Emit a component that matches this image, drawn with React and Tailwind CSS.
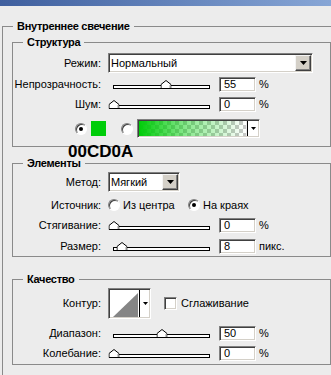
const sunken =
  'border border-t-[#808080] border-l-[#808080] border-r-white border-b-white shadow-[inset_1px_1px_0_#404040,inset_-1px_-1px_0_#d4d0c8]';
const raised =
  'border border-t-[#f4f4f4] border-l-[#f4f4f4] border-r-[#404040] border-b-[#404040] shadow-[inset_-1px_-1px_0_#808080]';

function Arrow({ small }) {
  return small ? (
    <svg width="5" height="3" viewBox="0 0 5 3"><polygon points="0,0 5,0 2.5,3" fill="#000" /></svg>
  ) : (
    <svg width="7" height="4" viewBox="0 0 7 4"><polygon points="0,0 7,0 3.5,4" fill="#000" /></svg>
  );
}

function Select({ value, width }) {
  return (
    <div className={`flex h-[20px] bg-white ${sunken} ${width}`}>
      <span className="flex-1 self-center pl-[2px] leading-[13px]">{value}</span>
      <div className={`w-[16px] m-px flex items-center justify-center bg-[#d4d0c8] ${raised}`}>
        <Arrow />
      </div>
    </div>
  );
}

function Thumb() {
  return (
    <svg width="11" height="9" viewBox="0 0 11 9">
      <polygon points="0.5,8.5 0.5,4.5 5.5,0.5 10.5,4.5 10.5,8.5" fill="#fff" stroke="#000" />
      <line x1="9.5" y1="5" x2="9.5" y2="8" stroke="#9a9a9a" />
    </svg>
  );
}

function Slider({ value }) {
  return (
    <div className="w-[107px] h-[9px] px-[5px] flex items-end">
      <div className="relative w-full h-[4px] border border-black bg-white">
        <div className="absolute bottom-[-1px] -translate-x-1/2" style={{ left: `${value}%` }}>
          <Thumb />
        </div>
      </div>
    </div>
  );
}

function Field({ value }) {
  return <div className={`w-[37px] h-[15px] bg-white pl-[4px] leading-[13px] ${sunken}`}>{value}</div>;
}

function Radio({ checked }) {
  return (
    <span className="w-[12px] h-[12px] shrink-0 rounded-full bg-white border border-t-[#808080] border-l-[#808080] border-r-white border-b-white shadow-[inset_1px_1px_0_#404040] flex items-center justify-center">
      {checked && <span className="w-[4px] h-[4px] rounded-full bg-black" />}
    </span>
  );
}

function Row({ label, children, className = '' }) {
  return (
    <div className={`flex items-center h-[20px] ${className}`}>
      <div className="w-[88px] text-right">{label}</div>
      <div className="ml-[7px] flex items-center">{children}</div>
    </div>
  );
}

function SliderRow({ label, value, unit = '%', className = '' }) {
  return (
    <Row label={label} className={className}>
      <Slider value={value} />
      <div className="ml-[4px]">
        <Field value={value} />
      </div>
      <span className="ml-[3px]">{unit}</span>
    </Row>
  );
}

function Group({ title, className = '', children }) {
  return (
    <fieldset className={`w-[319px] border border-[#8a8a8a] ${className}`}>
      <legend className="ml-[10px] px-[4px] font-bold leading-[13px] tracking-[-0.3px]">{title}</legend>
      {children}
    </fieldset>
  );
}

export default function App() {
  return (
    <div className="relative w-[331px] h-[375px] overflow-hidden bg-[#ececec] text-[11px] leading-[13px] text-black font-['Liberation_Sans',Arial,sans-serif]">
      <div className="h-[6px] bg-linear-to-r from-[#3f5f9e] to-[#87a6d6]" />

      <fieldset className="ml-[2px] mt-[14px] w-[360px] border border-[#8a8a8a] pl-[9px] pt-[3px] pb-[30px]">
        <legend className="ml-px px-[4px] font-bold leading-[13px] tracking-[-0.3px]">Внутреннее свечение</legend>

        <Group title="Структура" className="pt-[4px] pb-[8px]">
          <Row label="Режим:">
            <Select value="Нормальный" width="w-[205px]" />
          </Row>
          <SliderRow label="Непрозрачность:" value={55} className="mt-px" />
          <SliderRow label="Шум:" value={0} />
          <div className="flex items-center h-[19px] mt-[5px] ml-[62px]">
            <Radio checked />
            <div className="ml-[4px] w-[15px] h-[15px] bg-[#00cd0a]" />
            <div className="ml-[15px]">
              <Radio />
            </div>
            <div className={`ml-[4px] w-[123px] h-[19px] flex ${sunken}`}>
              <div className="flex-1 m-px bg-[image:linear-gradient(to_right,#00cd0a,rgba(0,205,10,0.45)_45%,rgba(0,205,10,0))_,repeating-conic-gradient(#c8c8c8_0_25%,#fff_0_50%)] bg-[length:100%_100%,8px_8px]" />
              <div className="w-[11px] my-px mr-px border-l border-black bg-white flex items-center justify-center">
                <Arrow small />
              </div>
            </div>
          </div>
        </Group>

        <Group title="Элементы" className="mt-[10px] pt-[2px]">
          <Row label="Метод:">
            <Select value="Мягкий" width="w-[72px]" />
          </Row>
          <Row label="Источник:" className="mt-[3px]">
            <label className="flex items-center w-[80px]">
              <Radio />
              <span className="ml-[3px]">Из центра</span>
            </label>
            <label className="flex items-center">
              <Radio checked />
              <span className="ml-[3px]">На краях</span>
            </label>
          </Row>
          <SliderRow label="Стягивание:" value={0} />
          <SliderRow label="Размер:" value={8} unit="пикс." className="mt-px" />
        </Group>

        <Group title="Качество" className="mt-[16px] pt-[2px] pb-px">
          <div className="flex items-center h-[31px]">
            <div className="w-[88px] text-right">Контур:</div>
            <div className={`ml-[7px] w-[43px] h-[31px] flex bg-white ${sunken}`}>
              <svg className="m-px" width="28" height="27" viewBox="0 0 28 27">
                <polygon points="3,27 28,3 28,27" fill="#858585" />
              </svg>
              <div className="w-[11px] my-px border-l border-black flex items-center justify-center">
                <Arrow small />
              </div>
            </div>
            <span className={`ml-[13px] w-[13px] h-[13px] bg-white ${sunken}`} />
            <span className="ml-[4px]">Сглаживание</span>
          </div>
          <SliderRow label="Диапазон:" value={50} className="mt-[4px]" />
          <SliderRow label="Колебание:" value={0} className="h-[19px]" />
        </Group>
      </fieldset>

      <div className="absolute left-[68px] top-[143px] text-[17px] font-bold leading-none">00CD0A</div>
    </div>
  );
}
